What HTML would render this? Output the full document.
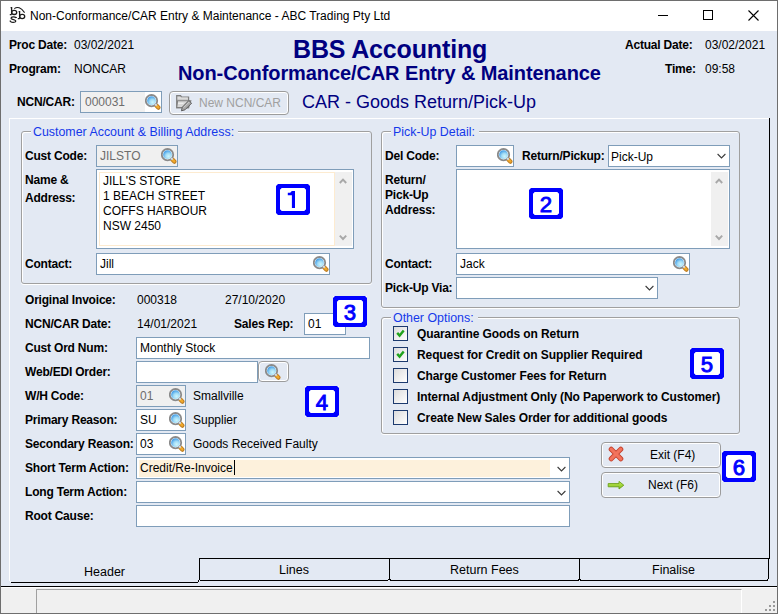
<!DOCTYPE html>
<html><head><meta charset="utf-8">
<style>
*{margin:0;padding:0;box-sizing:border-box}
html,body{width:778px;height:614px;overflow:hidden;background:#e3e9f3}
body{position:relative;font-family:"Liberation Sans",sans-serif;font-size:12px;color:#000}
.a{position:absolute}
.t{position:absolute;white-space:nowrap;line-height:12px}
.b{font-weight:bold;letter-spacing:-0.2px}
.nv{color:#000080}
.in{position:absolute;border:1px solid #7f9db9;background:#fff;height:22px}
.gr{background:#f0f0f0}
.grp{position:absolute;border:1px solid #a0a0a0;border-radius:3px;box-shadow:inset 1px 1px 0 #fff,0 1px 0 #fff}
.gt{position:absolute;color:#1438ea;background:#e3e9f3;padding:0 4px 0 2px;font-size:12.4px;line-height:12px;white-space:nowrap}
.sel svg.chev{position:absolute}
.cb{position:absolute;width:15px;height:15px;border:1px solid #1c3a6e;background:linear-gradient(135deg,#dcdcdc,#fff)}
.num{position:absolute;width:34px;height:31px;background:#fff}
.btn{position:absolute;border:1px solid #9c9c9c;border-radius:4px;box-shadow:inset 0 0 0 1px #fff;background:#e3e9f3}
</style></head><body>
<svg width="0" height="0" style="position:absolute">
 <defs>
  <radialGradient id="mg" cx="0.62" cy="0.68" r="0.65">
   <stop offset="0" stop-color="#cdf5fc"/>
   <stop offset="0.5" stop-color="#a2dcf6"/>
   <stop offset="1" stop-color="#4aa2e8"/>
  </radialGradient>
  <symbol id="mag" viewBox="0 0 16 16">
   <path d="M11.4 11.6 L13.3 13.6" stroke="#bb7d25" stroke-width="4.4" stroke-linecap="round"/>
   <path d="M11.5 11.7 L13.2 13.4" stroke="#f2a92a" stroke-width="2.6" stroke-linecap="round"/>
   <circle cx="6.5" cy="6.7" r="5.7" fill="#fff" stroke="#8a8a8a" stroke-width="1.8"/>
   <circle cx="6.5" cy="6.7" r="4.4" fill="url(#mg)"/>
   <path d="M10.3 11.5 L11.6 10.2" stroke="#d5e0ec" stroke-width="2"/>
  </symbol>
 </defs>
</svg>

<!-- window frame -->
<div class="a" style="left:0;top:0;width:778px;height:614px;border:1px solid #6e6e6e"></div>
<div class="a" style="left:1px;top:1px;width:776px;height:30px;background:#fff"></div>
<!-- app icon -->
<svg class="a" style="left:6px;top:4px" width="24" height="24" viewBox="0 0 24 24">
 <g fill="none" stroke="#1a1a1a" stroke-width="1.3">
  <path d="M4.6 3.7H5.6V10.6M3.8 10.6H5.6"/>
  <ellipse cx="8.2" cy="8.4" rx="2.5" ry="2.1"/>
  <path d="M10.2 13.6Q8 12.4 5.8 13.2Q4.3 14.3 6 15.2L8.6 16Q10.6 17 9 18Q6.5 19 4.4 17.4M4.3 16.6V17.8M10.2 12.9V14"/>
  <path d="M12.6 7.7H13.6V14.7M11.8 14.7H13.6"/>
  <ellipse cx="16.2" cy="12.5" rx="2.5" ry="2.1"/>
 </g>
 <path d="M8.3 4.6Q13 1 18.6 8.6" fill="none" stroke="#1a1a1a" stroke-width="1.1"/>
</svg>
<div class="t" style="left:30px;top:10px">Non-Conformance/CAR Entry &amp; Maintenance - ABC Trading Pty Ltd</div>
<!-- caption buttons -->
<div class="a" style="left:658px;top:15px;width:10px;height:1px;background:#000"></div>
<div class="a" style="left:703px;top:10px;width:10px;height:10px;border:1px solid #000"></div>
<svg class="a" style="left:748px;top:10px" width="11" height="11"><path d="M0.5 0.5L10.5 10.5M10.5 0.5L0.5 10.5" stroke="#000" stroke-width="1.1"/></svg>

<!-- header -->
<div class="t b" style="left:9px;top:39px">Proc Date:</div>
<div class="t" style="left:74px;top:39px">03/02/2021</div>
<div class="t b" style="left:9px;top:63px">Program:</div>
<div class="t" style="left:74px;top:63px">NONCAR</div>
<div class="t b nv" style="left:293px;top:37px;font-size:25px;line-height:24px;letter-spacing:-0.15px">BBS Accounting</div>
<div class="t b nv" style="left:178px;top:63px;font-size:20px;line-height:20px;letter-spacing:-0.1px">Non-Conformance/CAR Entry &amp; Maintenance</div>
<div class="t b" style="left:625px;top:39px">Actual Date:</div>
<div class="t" style="left:705px;top:39px">03/02/2021</div>
<div class="t b" style="left:665px;top:63px">Time:</div>
<div class="t" style="left:705px;top:63px">09:58</div>

<div class="t b" style="left:17px;top:96px">NCN/CAR:</div>
<div class="in" style="left:80px;top:91px;width:82px;background:linear-gradient(90deg,#f0f0f0 64px,#fff 64px)"></div>
<div class="t" style="left:85px;top:96px;color:#6d6d6d">000031</div>
<svg class="a" style="left:145px;top:94px" width="16" height="16"><use href="#mag"/></svg>
<div class="btn" style="left:169px;top:91px;width:120px;height:24px"></div>
<svg class="a" style="left:176px;top:95px" width="17" height="17" viewBox="0 0 17 17">
 <path d="M0.7 0.7H4.6L5.6 2.2H12.6V12.6H0.7Z" fill="#cbcbcb" stroke="#7f7f7f" stroke-width="1.2"/>
 <path d="M1.6 3H11.8M1.6 7.3H8" stroke="#eeeeee" stroke-width="1"/>
 <path d="M1.6 5.8H14.8L12.4 12.6H0.7Z" fill="#d6d6d6" stroke="#7f7f7f" stroke-width="1.1"/>
 <path d="M2 8.3H7.5" stroke="#f2f2f2" stroke-width="1"/>
 <path d="M5.4 15.8L6.3 12.2L12.8 5.6L15.6 8.2L9 14.8Z" fill="#a8a8a8" stroke="#5e5e5e" stroke-width="1"/>
 <path d="M7.6 12.6L13.4 6.8" stroke="#d8d8d8" stroke-width="0.8"/>
</svg>
<div class="t" style="left:199px;top:97px;color:#a0a0a0">New NCN/CAR</div>
<div class="t nv" style="left:302px;top:93px;font-size:18px;line-height:18px">CAR - Goods Return/Pick-Up</div>

<!-- tab panel -->
<div class="a" style="left:9px;top:118px;width:760px;height:1px;background:#fff"></div>
<div class="a" style="left:9px;top:118px;width:1px;height:463px;background:#fff"></div>
<div class="a" style="left:769px;top:118px;width:1px;height:441px;background:#000"></div>

<!-- status bar -->
<div class="a" style="left:1px;top:586px;width:776px;height:1px;background:#000"></div>
<div class="a" style="left:1px;top:587px;width:776px;height:26px;background:#f0f0f0;border-top:1px solid #fff"></div>
<div class="a" style="left:36px;top:589px;width:706px;height:24px;border-left:1px solid #a0a0a0;border-top:1px solid #a0a0a0;border-right:1px solid #fff"></div>


<!-- ===== left group ===== -->
<div class="grp" style="left:21px;top:131px;width:351px;height:153px"></div>
<div class="gt" style="left:31px;top:126px">Customer Account &amp; Billing Address:</div>
<div class="t b" style="left:25px;top:150px">Cust Code:</div>
<div class="in gr" style="left:96px;top:145px;width:82px"></div>
<div class="t" style="left:100px;top:150px;color:#6d6d6d">JILSTO</div>
<svg class="a" style="left:161px;top:148px" width="16" height="16"><use href="#mag"/></svg>
<div class="t b" style="left:25px;top:174px">Name &amp;</div>
<div class="t b" style="left:25px;top:192px">Address:</div>
<div class="in" style="left:96px;top:169px;width:258px;height:80px;padding:2px">
 <div style="position:absolute;left:2px;top:2px;width:236px;height:74px;border:1px solid #fdebd0"></div>
 <div style="position:absolute;left:238px;top:2px;width:17px;height:74px;background:#f0f0f0"></div>
</div>
<svg class="a" style="left:339px;top:177px" width="9" height="66"><path d="M0.8 6L4 2.6L7.2 6M0.8 58.6L4 62L7.2 58.6" fill="none" stroke="#a8a8a8" stroke-width="1.9"/></svg>
<div class="t" style="left:103px;top:175px">JILL'S STORE</div>
<div class="t" style="left:103px;top:190px">1 BEACH STREET</div>
<div class="t" style="left:103px;top:205px">COFFS HARBOUR</div>
<div class="t" style="left:103px;top:220px">NSW 2450</div>
<div class="t b" style="left:25px;top:258px">Contact:</div>
<div class="in" style="left:96px;top:253px;width:234px"></div>
<div class="t" style="left:100px;top:258px">Jill</div>
<svg class="a" style="left:313px;top:256px" width="16" height="16"><use href="#mag"/></svg>

<!-- ===== right group ===== -->
<div class="grp" style="left:381px;top:131px;width:359px;height:177px"></div>
<div class="gt" style="left:391px;top:126px">Pick-Up Detail:</div>
<div class="t b" style="left:385px;top:150px">Del Code:</div>
<div class="in" style="left:456px;top:145px;width:58px"></div>
<svg class="a" style="left:497px;top:148px" width="16" height="16"><use href="#mag"/></svg>
<div class="t b" style="left:522px;top:150px">Return/Pickup:</div>
<div class="in" style="left:608px;top:145px;width:122px"></div>
<div class="t" style="left:611px;top:151px">Pick-Up</div>
<svg class="a" style="left:717px;top:153px" width="10" height="7"><path d="M0.6 1L4.5 4.9L8.4 1" fill="none" stroke="#3a3a3a" stroke-width="1.1"/></svg>
<div class="t b" style="left:385px;top:174px">Return/</div>
<div class="t b" style="left:385px;top:189px">Pick-Up</div>
<div class="t b" style="left:385px;top:204px">Address:</div>
<div class="in" style="left:456px;top:169px;width:274px;height:80px">
 <div style="position:absolute;left:254px;top:2px;width:17px;height:74px;background:#f0f0f0"></div>
</div>
<svg class="a" style="left:715px;top:177px" width="9" height="66"><path d="M0.8 6L4 2.6L7.2 6M0.8 58.6L4 62L7.2 58.6" fill="none" stroke="#a8a8a8" stroke-width="1.9"/></svg>
<div class="t b" style="left:385px;top:258px">Contact:</div>
<div class="in" style="left:456px;top:253px;width:234px"></div>
<div class="t" style="left:460px;top:258px">Jack</div>
<svg class="a" style="left:673px;top:256px" width="16" height="16"><use href="#mag"/></svg>
<div class="t b" style="left:385px;top:282px">Pick-Up Via:</div>
<div class="in" style="left:456px;top:277px;width:202px"></div>
<svg class="a" style="left:645px;top:285px" width="10" height="7"><path d="M0.6 1L4.5 4.9L8.4 1" fill="none" stroke="#3a3a3a" stroke-width="1.1"/></svg>

<!-- ===== left fields ===== -->
<div class="t b" style="left:25px;top:294px">Original Invoice:</div>
<div class="t" style="left:137px;top:294px">000318</div>
<div class="t" style="left:225px;top:294px">27/10/2020</div>
<div class="t b" style="left:25px;top:318px">NCN/CAR Date:</div>
<div class="t" style="left:137px;top:318px">14/01/2021</div>
<div class="t b" style="left:234px;top:318px">Sales Rep:</div>
<div class="in" style="left:304px;top:313px;width:42px"></div>
<div class="t" style="left:308px;top:318px">01</div>
<div class="t b" style="left:25px;top:342px">Cust Ord Num:</div>
<div class="in" style="left:136px;top:337px;width:234px"></div>
<div class="t" style="left:140px;top:342px">Monthly Stock</div>
<div class="t b" style="left:25px;top:366px">Web/EDI Order:</div>
<div class="in" style="left:136px;top:361px;width:122px"></div>
<div class="btn" style="left:258px;top:361px;width:31px;height:21px"></div>
<svg class="a" style="left:265px;top:364px" width="16" height="16"><use href="#mag"/></svg>
<div class="t b" style="left:25px;top:390px">W/H Code:</div>
<div class="in gr" style="left:136px;top:385px;width:50px"></div>
<div class="t" style="left:140px;top:390px;color:#6d6d6d">01</div>
<svg class="a" style="left:169px;top:388px" width="16" height="16"><use href="#mag"/></svg>
<div class="t" style="left:193px;top:390px">Smallville</div>
<div class="t b" style="left:25px;top:414px">Primary Reason:</div>
<div class="in" style="left:136px;top:409px;width:50px"></div>
<div class="t" style="left:140px;top:414px">SU</div>
<svg class="a" style="left:169px;top:412px" width="16" height="16"><use href="#mag"/></svg>
<div class="t" style="left:193px;top:414px">Supplier</div>
<div class="t b" style="left:25px;top:438px">Secondary Reason:</div>
<div class="in" style="left:136px;top:433px;width:50px"></div>
<div class="t" style="left:140px;top:438px">03</div>
<svg class="a" style="left:169px;top:436px" width="16" height="16"><use href="#mag"/></svg>
<div class="t" style="left:193px;top:438px">Goods Received Faulty</div>
<div class="t b" style="left:25px;top:462px">Short Term Action:</div>
<div class="in" style="left:136px;top:457px;width:434px"><div style="position:absolute;left:2px;top:2px;width:411px;height:17px;background:#fdf1dc"></div></div>
<div class="t" style="left:140px;top:462px">Credit/Re-Invoice</div>
<div class="a" style="left:234px;top:460px;width:1px;height:15px;background:#000"></div>
<svg class="a" style="left:557px;top:466px" width="10" height="7"><path d="M0.6 1L4.5 4.9L8.4 1" fill="none" stroke="#3a3a3a" stroke-width="1.1"/></svg>
<div class="t b" style="left:25px;top:486px">Long Term Action:</div>
<div class="in" style="left:136px;top:481px;width:434px"></div>
<svg class="a" style="left:557px;top:490px" width="10" height="7"><path d="M0.6 1L4.5 4.9L8.4 1" fill="none" stroke="#3a3a3a" stroke-width="1.1"/></svg>
<div class="t b" style="left:25px;top:510px">Root Cause:</div>
<div class="in" style="left:136px;top:505px;width:434px"></div>

<!-- ===== other options ===== -->
<div class="grp" style="left:381px;top:317px;width:359px;height:117px"></div>
<div class="gt" style="left:391px;top:312px">Other Options:</div>
<div class="cb" style="left:393px;top:326px"></div>
<div class="t b" style="left:417px;top:328px;letter-spacing:-0.1px">Quarantine Goods on Return</div>
<div class="cb" style="left:393px;top:347px"></div>
<div class="t b" style="left:417px;top:349px;letter-spacing:-0.1px">Request for Credit on Supplier Required</div>
<div class="cb" style="left:393px;top:368px"></div>
<div class="t b" style="left:417px;top:370px;letter-spacing:-0.1px">Charge Customer Fees for Return</div>
<div class="cb" style="left:393px;top:389px"></div>
<div class="t b" style="left:417px;top:391px;letter-spacing:-0.1px">Internal Adjustment Only (No Paperwork to Customer)</div>
<div class="cb" style="left:393px;top:410px"></div>
<div class="t b" style="left:417px;top:412px;letter-spacing:-0.1px">Create New Sales Order for additional goods</div>
<svg class="a" style="left:395px;top:329px" width="10" height="9"><path d="M2.2 3.9L4.6 6.6L8.7 1.6" fill="none" stroke="#21a31d" stroke-width="2.4"/></svg>
<svg class="a" style="left:395px;top:350px" width="10" height="9"><path d="M2.2 3.9L4.6 6.6L8.7 1.6" fill="none" stroke="#21a31d" stroke-width="2.4"/></svg>

<!-- ===== buttons ===== -->
<div class="btn" style="left:601px;top:442px;width:120px;height:26px"></div>
<svg class="a" style="left:608px;top:446px" width="16" height="16" viewBox="0 0 16 16"><path d="M3.2 3.2L12.8 12.8M12.8 3.2L3.2 12.8" stroke="#c4402c" stroke-width="5" stroke-linecap="round"/><path d="M3.2 3.2L12.8 12.8M12.8 3.2L3.2 12.8" stroke="#f2735c" stroke-width="3.3" stroke-linecap="round"/></svg>
<div class="t" style="left:650px;top:449px">Exit (F4)</div>
<div class="btn" style="left:601px;top:472px;width:120px;height:26px"></div>
<svg class="a" style="left:607px;top:478px" width="18" height="12" viewBox="0 0 18 12"><defs><linearGradient id="ga" x1="0" y1="0" x2="0" y2="1"><stop offset="0" stop-color="#c8ec5a"/><stop offset="1" stop-color="#7cc01a"/></linearGradient></defs><path d="M1.2 5.6H12V3.4L16.8 7.2L12 11V8.8H1.2z" fill="url(#ga)" stroke="#6a9e18" stroke-width="0.9" stroke-linejoin="round"/></svg>
<div class="t" style="left:648px;top:479px">Next (F6)</div>

<!-- ===== bottom tabs ===== -->
<div class="a" style="left:199px;top:558px;width:571px;height:1px;background:#000"></div>
<div class="a" style="left:11px;top:582px;width:187px;height:1px;background:#000"></div>
<div class="a" style="left:198px;top:580px;width:1px;height:2px;background:#000"></div>
<div class="a" style="left:199px;top:558px;width:1px;height:22px;background:#000"></div>
<div class="a" style="left:389px;top:558px;width:1px;height:21px;background:#000"></div>
<div class="a" style="left:579px;top:558px;width:1px;height:21px;background:#000"></div>
<div class="a" style="left:768px;top:558px;width:1px;height:21px;background:#000"></div>
<div class="a" style="left:200px;top:580px;width:188px;height:1px;background:#000"></div>
<div class="a" style="left:390px;top:580px;width:189px;height:1px;background:#000"></div>
<div class="a" style="left:580px;top:580px;width:188px;height:1px;background:#000"></div>
<div class="a" style="left:388px;top:579px;width:3px;height:1px;background:#000"></div>
<div class="a" style="left:578px;top:579px;width:3px;height:1px;background:#000"></div>
<div class="a" style="left:767px;top:579px;width:1px;height:1px;background:#000"></div>
<div class="a" style="left:10px;top:581px;width:1px;height:1px;background:#fff"></div>
<div class="t" style="left:84px;top:566px;font-size:12.5px">Header</div>
<div class="t" style="left:279px;top:564px;font-size:12.5px">Lines</div>
<div class="t" style="left:450px;top:564px;font-size:12.5px">Return Fees</div>
<div class="t" style="left:652px;top:564px;font-size:12.5px">Finalise</div>

<!-- ===== numbered markers ===== -->
<div class="num" style="left:276px;top:184px"><svg width="34" height="31" viewBox="0 0 34 31"><path d="M2 0H32L34 2V29L32 31H2L0 29V2Z M6 4H28L30 6V25L28 27H6L4 25V6Z" fill="#0000ff" fill-rule="evenodd"/><path d="M6 4H28L30 6V25L28 27H6L4 25V6Z" fill="#fff"/><path d="M15.9 7H19V24H15.9V11.3H11.8V8.7H14.2L15.9 7Z" fill="#0000ff"/></svg></div>
<div class="num" style="left:529px;top:188px"><svg width="34" height="31" viewBox="0 0 34 31"><path d="M2 0H32L34 2V29L32 31H2L0 29V2Z M6 4H28L30 6V25L28 27H6L4 25V6Z" fill="#0000ff" fill-rule="evenodd"/><path d="M6 4H28L30 6V25L28 27H6L4 25V6Z" fill="#fff"/><text x="17" y="23.8" text-anchor="middle" font-family="Liberation Sans" font-size="22.2" fill="#0000ff" stroke="#0000ff" stroke-width="0.9">2</text></svg></div>
<div class="num" style="left:333px;top:296px"><svg width="34" height="31" viewBox="0 0 34 31"><path d="M2 0H32L34 2V29L32 31H2L0 29V2Z M6 4H28L30 6V25L28 27H6L4 25V6Z" fill="#0000ff" fill-rule="evenodd"/><path d="M6 4H28L30 6V25L28 27H6L4 25V6Z" fill="#fff"/><text x="17" y="23.8" text-anchor="middle" font-family="Liberation Sans" font-size="22.2" fill="#0000ff" stroke="#0000ff" stroke-width="0.9">3</text></svg></div>
<div class="num" style="left:305px;top:386px"><svg width="34" height="31" viewBox="0 0 34 31"><path d="M2 0H32L34 2V29L32 31H2L0 29V2Z M6 4H28L30 6V25L28 27H6L4 25V6Z" fill="#0000ff" fill-rule="evenodd"/><path d="M6 4H28L30 6V25L28 27H6L4 25V6Z" fill="#fff"/><text x="17" y="23.8" text-anchor="middle" font-family="Liberation Sans" font-size="22.2" fill="#0000ff" stroke="#0000ff" stroke-width="0.9">4</text></svg></div>
<div class="num" style="left:690px;top:348px"><svg width="34" height="31" viewBox="0 0 34 31"><path d="M2 0H32L34 2V29L32 31H2L0 29V2Z M6 4H28L30 6V25L28 27H6L4 25V6Z" fill="#0000ff" fill-rule="evenodd"/><path d="M6 4H28L30 6V25L28 27H6L4 25V6Z" fill="#fff"/><text x="17" y="23.8" text-anchor="middle" font-family="Liberation Sans" font-size="22.2" fill="#0000ff" stroke="#0000ff" stroke-width="0.9">5</text></svg></div>
<div class="num" style="left:722px;top:451px"><svg width="34" height="31" viewBox="0 0 34 31"><path d="M2 0H32L34 2V29L32 31H2L0 29V2Z M6 4H28L30 6V25L28 27H6L4 25V6Z" fill="#0000ff" fill-rule="evenodd"/><path d="M6 4H28L30 6V25L28 27H6L4 25V6Z" fill="#fff"/><text x="17" y="23.8" text-anchor="middle" font-family="Liberation Sans" font-size="22.2" fill="#0000ff" stroke="#0000ff" stroke-width="0.9">6</text></svg></div>


<!-- grip -->
<div class="a" style="left:773px;top:601px;width:2px;height:2px;background:#9a9a9a"></div>
<div class="a" style="left:769px;top:605px;width:2px;height:2px;background:#9a9a9a"></div>
<div class="a" style="left:773px;top:605px;width:2px;height:2px;background:#9a9a9a"></div>
<div class="a" style="left:765px;top:609px;width:2px;height:2px;background:#9a9a9a"></div>
<div class="a" style="left:769px;top:609px;width:2px;height:2px;background:#9a9a9a"></div>
<div class="a" style="left:773px;top:609px;width:2px;height:2px;background:#9a9a9a"></div>
</body></html>
